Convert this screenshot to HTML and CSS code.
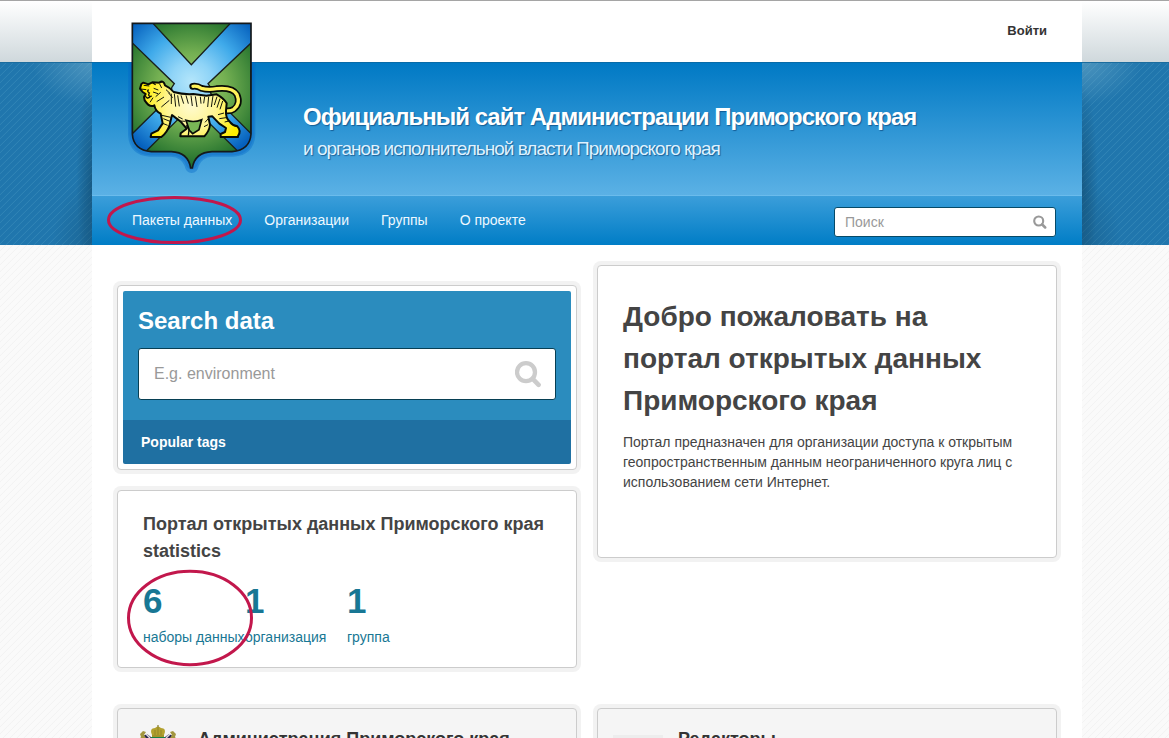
FILE: index.html
```
<!DOCTYPE html>
<html lang="ru">
<head>
<meta charset="utf-8">
<title>Портал открытых данных Приморского края</title>
<link rel="stylesheet" href="styles.css">
</head>
<body>
<div class="band">
  <div class="band-top"></div>
  <div class="band-blue"></div>
</div>
<div class="page">
  <header class="header">
    <div class="account"><a class="login">Войти</a></div>
    <div class="masthead">
      <div class="title">Официальный сайт Администрации Приморского края</div>
      <div class="subtitle">и органов исполнительной власти Приморского края</div>
    </div>
    <nav class="nav">
      <div class="links">
        <a class="marked">Пакеты данных<svg class="mark-nav" width="136" height="50" viewBox="0 0 136 50"><ellipse cx="68.5" cy="25" rx="66" ry="22.6"/></svg></a>
        <a>Организации</a><a>Группы</a><a>О проекте</a>
      </div>
      <div class="site-search"><span>Поиск</span>
        <svg width="14" height="14" viewBox="0 0 14 14"><circle cx="5.7" cy="6" r="4.5" fill="none" stroke="#999" stroke-width="2.1"/><path d="M9.2 9.5L12.2 12.5" stroke="#999" stroke-width="2.5" stroke-linecap="round"/></svg>
      </div>
    </nav>
    <svg class="crest" width="145" height="170" viewBox="0 0 435 510">
      <defs>
        <radialGradient id="blue" gradientUnits="userSpaceOnUse" cx="214" cy="215" r="245"><stop offset="0" stop-color="#b4e6fb"/><stop offset=".25" stop-color="#8fd4f7"/><stop offset=".6" stop-color="#3faaea"/><stop offset="1" stop-color="#0560bd"/></radialGradient>
        <radialGradient id="green" gradientUnits="userSpaceOnUse" cx="214" cy="235" r="235"><stop offset="0" stop-color="#a0d070"/><stop offset=".45" stop-color="#74b052"/><stop offset="1" stop-color="#1c6c2a"/></radialGradient>
        <radialGradient id="gold" gradientUnits="userSpaceOnUse" cx="214" cy="285" r="150"><stop offset="0" stop-color="#fffbd0"/><stop offset=".5" stop-color="#fff592"/><stop offset="1" stop-color="#ffed00"/></radialGradient>
        <clipPath id="shield"><path d="M37 40H393V372Q390 420 336 425H276Q225 427 217 474H212Q204 427 154 425H94Q40 420 37 372Z"/></clipPath>
      </defs>
      <path d="M24 156H406V374Q402 436 340 440H276Q246 442 236 468Q232 489 215 489Q198 489 194 468Q184 442 154 440H90Q28 436 24 374Z" fill="#0668c8" opacity=".4"/>
      <path d="M29 156H401V374Q397 432 338 436H276Q241 438 231 468Q215 491 199 468Q189 438 154 436H92Q33 432 29 374Z" fill="#0668c8" opacity=".3"/>
      <g clip-path="url(#shield)">
        <path d="M30 30H400V480H30Z" fill="url(#blue)"/>
        <path d="M98 39H332L214 164ZM37 99L163 221L155 233V255L37 371ZM393 99L264 221L272 233V250L393 371ZM76 426L192 310H238L356 426V480H76Z" fill="url(#green)" stroke="#19201c" stroke-width="4"/>
      </g>
      <path d="M37 40H393V372Q390 420 336 425H276Q225 427 217 474H212Q204 427 154 425H94Q40 420 37 372Z" fill="none" stroke="#15191b" stroke-width="5"/>
      <g fill="none" stroke-linecap="round">
        <path d="M218 229Q232 227 244 235Q266 241 290 236Q338 231 351 254Q363 282 341 298Q328 307 300 299" stroke="#080b06" stroke-width="20"/>
        <path d="M219 229Q232 227 244 235Q266 241 290 236Q338 231 351 254Q363 282 341 298Q328 307 300 299" stroke="#fff25a" stroke-width="10"/>
      </g>
      <path d="M70 218L85 223 97 217 118 218Q131 209 135 226Q151 233 161 246Q190 254 220 252L259 257 290 253Q312 265 320 280L318 302Q316 325 331 337Q337 346 352 349Q365 363 354 378V381H302V372L315 366 318 354 298 341 277 319 265 320 270 345Q268 363 253 379H181L182 370 200 356 184 337 173 328 156 315 149 344Q142 367 124 381H92L94 371 114 361 128 340 122 311Q106 303 103 286Q89 294 74 271L72 261 77 252 68 246 60 236 64 222Z" fill="url(#gold)" stroke="#080b06" stroke-width="6" stroke-linejoin="round"/>
      <path d="M198 331Q222 339 245 329L237 359 218 371 208 361Z" fill="#79b756" stroke="#080b06" stroke-width="5"/>
      <path d="M199 346L207 359 205 377" fill="none" stroke="#080b06" stroke-width="4"/>
      <g class="stripes">
        <path d="M71 226L88 228M62 237L79 239M82 264L96 258M90 277L99 263M119 222L125 234M101 235L115 240M99 246L114 251M107 260L122 247M110 275L132 261M124 291L148 271M138 239L151 251M145 248L158 263M154 251L154 282M163 251L167 290M173 256L178 289M183 256L191 281M198 256L205 281M213 257L217 288M226 259L231 291M241 260L243 281M254 260L251 280M266 260L263 291M279 257L274 291M291 260L283 285M300 266L291 293M308 273L300 298"/>
        <path d="M126 316L152 322M130 326L150 334M128 340L143 346M174 320L188 327M181 333L196 334M265 326L255 337M264 344L252 350M294 314L312 309M298 326L318 323M314 336L327 333"/>
      </g>
      <path d="M98 219L107 224M86 239Q79 243 88 249Q83 258 91 259Q82 271 76 257" fill="none" stroke="#080b06" stroke-width="4"/>
    </svg>
  </header>
  <main class="content">
    <div class="column left">
      <section class="box search-box">
        <div class="search-panel">
          <h2>Search data</h2>
          <div class="data-search"><span>E.g. environment</span>
            <svg width="28" height="28" viewBox="0 0 28 28"><circle cx="11" cy="12.2" r="9" fill="none" stroke="#ccc" stroke-width="4.3"/><path d="M18 19.2L23.6 24.8" stroke="#ccc" stroke-width="4.6" stroke-linecap="round"/></svg>
          </div>
        </div>
        <div class="tags">Popular tags</div>
      </section>
      <section class="box stats">
        <h3>Портал открытых данных Приморского края statistics</h3>
        <div class="numbers">
          <a class="marked"><b>6</b><span>наборы данных</span><svg class="mark-stats" width="128" height="98" viewBox="0 0 128 98"><ellipse cx="64" cy="49" rx="61.5" ry="46.7"/></svg></a>
          <a><b>1</b><span>организация</span></a>
          <a><b>1</b><span>группа</span></a>
        </div>
      </section>
    </div>
    <div class="column">
      <section class="box welcome">
        <h1>Добро пожаловать на портал открытых данных Приморского края</h1>
        <p>Портал предназначен для организации доступа к открытым геопространственным данным неограниченного круга лиц с использованием сети Интернет.</p>
      </section>
    </div>
  </main>
  <div class="cards">
    <section class="box card">
      <svg class="emblem" width="50" height="40" viewBox="0 0 50 40">
        <path d="M15 12H35V40H15Z" fill="#168047"/>
        <path d="M8 12L14 9 18 12V40H8ZM42 12L36 9 32 12V40H42Z" fill="#292451"/>
        <path d="M13 9L17 13M37 9L33 13" stroke="#ddd" stroke-width="1.5"/>
        <path d="M7 9L10 6 13 7 11 10 13 13 9 16H5L8 12ZM43 9L40 6 37 7 39 10 37 13 41 16H45L42 12Z" fill="#a3963f"/>
        <path d="M19 10Q16 3 22 3Q25 0 28 3Q34 3 31 10V12H19Z" fill="#b3a12e"/>
        <path d="M25 0V10M24 1H26M22 5V10M28 5V10M19 11H31" stroke="#857825" stroke-width=".7"/>
      </svg>
      <h3>Администрация Приморского края</h3>
    </section>
    <section class="box card"><div class="placeholder"></div><h3>Редакторы</h3></section>
  </div>
</div>
</body>
</html>
```
FILE: styles.css
```
* { box-sizing: border-box; }
html { height: 100%; overflow: hidden; }
body {
  margin: 0; height: 738px; overflow: hidden; position: relative;
  font: 14px/20px "Liberation Sans", Arial, sans-serif; color: #444;
  background: repeating-linear-gradient(135deg, #fafafa 0, #fafafa 3.4px, #f3f3f3 4.2px, #fafafa 4.95px);
}
h1, h2, h3, p { margin: 0; }
.band { position: absolute; left: 0; right: 0; top: 0; }
.band-top { height: 62px; border-top: 1px solid #a5a5a5; background: linear-gradient(#fff, #cfd8dc); }
.band-blue {
  height: 183px; border-top: 1px solid #1b6c9e;
  background:
    radial-gradient(ellipse at 100% 60%, rgba(10,50,75,.4), transparent 70%) 76px 20px / 16px 163px no-repeat,
    radial-gradient(ellipse at 0 60%, rgba(10,50,75,.4), transparent 70%) 1082px 20px / 16px 163px no-repeat,
    radial-gradient(ellipse at 100% 100%, rgba(10,50,75,.25), transparent 70%) 52px 113px / 40px 70px no-repeat,
    radial-gradient(ellipse at 0 100%, rgba(10,50,75,.25), transparent 70%) 1082px 113px / 40px 70px no-repeat,
    radial-gradient(farthest-side at 100% 0, rgba(130,185,210,.45), transparent) 32px 0 / 60px 42px no-repeat,
    radial-gradient(farthest-side at 0 0, rgba(130,185,210,.45), transparent) 1082px 0 / 60px 42px no-repeat,
    repeating-linear-gradient(135deg, #2076ad 0, #2076ad 3.4px, #2f83b5 4.2px, #2076ad 4.95px);
}
.page { position: relative; width: 990px; height: 738px; margin: 0 0 0 92px; background: #fff; overflow: hidden; }
.header { position: relative; height: 245px; }
.account { height: 62px; border-top: 1px solid #a5a5a5; padding: 19px 35px 0 0; text-align: right; }
.login { font-size: 13px; font-weight: bold; color: #333; }
.masthead {
  height: 133px; padding: 38px 0 0 211px; border-top: 1px solid #086ba8;
  background: linear-gradient(#0079c4, #5bb1e5); color: #fff; text-shadow: 1px 1px 1px rgba(0,50,100,.55);
}
.title { font-size: 24px; line-height: 32px; font-weight: bold; letter-spacing: -1px; white-space: nowrap; }
.subtitle { margin-top: 1px; font-size: 19px; line-height: 30px; letter-spacing: -1px; color: #dff2ff; white-space: nowrap; }
.nav {
  height: 50px; padding: 0 26px 0 40px; display: flex; justify-content: space-between; align-items: center;
  border-top: 1px solid #6bbcec; background: linear-gradient(#3b9eda, #007dc6);
}
.links { display: flex; gap: 32px; margin-bottom: 2px; color: #eef8ff; }
.marked { position: relative; }
.mark-nav { position: absolute; left: -26px; top: -15px; }
.mark-nav, .mark-stats { fill: none; stroke: #c2174c; stroke-width: 3px; }
.site-search {
  width: 222px; height: 30px; margin-top: 2px; padding: 0 8px 0 10px; display: flex; justify-content: space-between; align-items: center;
  background: #fff; border: 1px solid #064a68; border-radius: 3px; color: #999;
}
.crest { position: absolute; left: 28px; top: 10px; }
.stripes { fill: none; stroke: #14170a; stroke-width: 3; }
.content { display: flex; gap: 20px; padding: 20px 25px 0; }
.column { width: 460px; }
.left { padding-top: 20px; }
.box { border: 1px solid #ccc; border-radius: 4px; background: #fff; box-shadow: 0 0 0 4px #f2f2f2; }
.search-box { height: 185px; padding: 5px; }
.search-panel { height: 129px; padding: 15px 15px 0; background: #2b8cbe; border-radius: 2px 2px 0 0; }
.search-panel h2 { font-size: 24px; line-height: 30px; color: #fff; }
.data-search {
  height: 52px; margin-top: 12px; padding: 0 12px 0 15px; display: flex; justify-content: space-between; align-items: center;
  background: #fff; border: 1px solid #073f54; border-radius: 3px; color: #999; font-size: 16px;
}
.tags { height: 44px; padding: 12px 18px; background: #1f70a2; border-radius: 0 0 2px 2px; color: #fff; font-weight: bold; }
.stats { height: 178px; margin-top: 20px; padding: 20px 25px; }
.stats h3 { font-size: 18px; line-height: 27px; }
.numbers { display: flex; margin-top: 11px; color: #187794; }
.numbers a { width: 102px; white-space: nowrap; }
.numbers b { display: block; font-size: 35px; line-height: 50px; }
.numbers span { display: block; margin-top: 1px; line-height: 20px; }
.mark-stats { position: absolute; left: -17px; top: -7px; z-index: 1; }
.welcome { height: 293px; padding: 30px 25px; }
.welcome h1 { font-size: 28px; line-height: 42px; }
.welcome p { margin-top: 10px; }
.cards { display: flex; gap: 20px; padding: 40px 25px 0; }
.card { width: 460px; height: 80px; flex: none; display: flex; gap: 15px; padding: 16px 15px; background: #f5f5f5; }
.card h3 { margin-top: 1px; font-size: 18px; line-height: 27px; color: #333; }
.placeholder { width: 50px; height: 50px; margin-top: 10px; background: #ededed; }
```
